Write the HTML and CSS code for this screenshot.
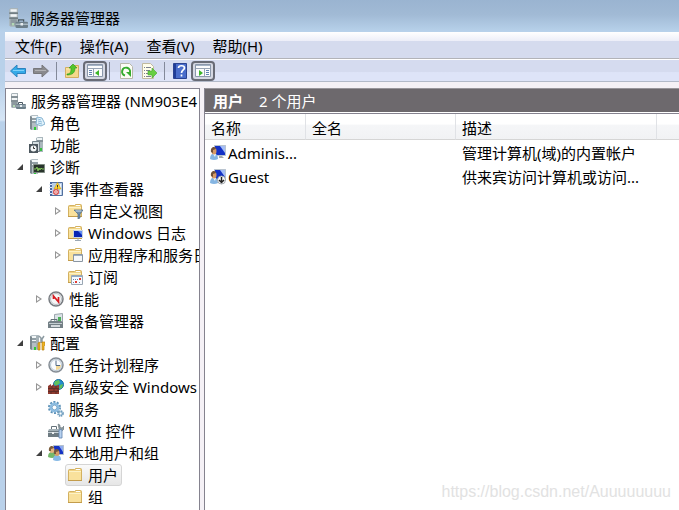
FILE: index.html
```html
<!DOCTYPE html>
<html lang="zh-CN">
<head>
    <meta charset="UTF-8">
    <meta name="viewport" content="width=device-width, initial-scale=1.0">
    <title>服务器管理器</title>
    <link rel="stylesheet" href="styles.css">
</head>
<body>
    <!-- Shared icons -->
    <svg class="icon-defs" aria-hidden="true">
        <symbol id="i-server" viewBox="0 0 16 16">
            <path d="M1 1l1-1h6v15H2l-1-1z" fill="#a9b4b9"/>
            <path d="M2 1h5v2H2zM2 5h5v2H2z" fill="#f2f5f6"/>
            <path d="M1 4h7M1 8h7" stroke="#606c72"/>
            <path d="M2 9h5v5H2z" fill="#8d999f"/>
            <path d="M3 12h2v2H3z" fill="#b3d8b5"/>
            <path d="M8.500 11V9.500h4V11" fill="none" stroke="#4b5962"/>
            <rect x="6" y="11" width="10" height="5" rx="1" fill="#6c7e89"/>
            <path d="M6 13h10" stroke="#b4c2ca"/>
            <path d="M10 12h2v2h-2z" fill="#e6edf0"/>
        </symbol>
        <symbol id="i-tower" viewBox="0 0 16 16">
            <path d="M1 1l2-1h6v15H3l-2-1z" fill="#b4bfc5"/>
            <path d="M1 1l2 1v13l-2-1z" fill="#7d8990"/>
            <path d="M3 1h6v2H3zM3 5h6v1H3z" fill="#f4f8f9"/>
            <path d="M3 4h6M3 7h6" stroke="#718087"/>
            <path d="M5 12h2v3H5z" fill="#2dcc36"/>
        </symbol>
        <symbol id="i-roles" viewBox="0 0 16 16">
            <use href="#i-tower" width="16" height="16"/>
            <path d="M8 2l5 1 3 6-4 2-5-2z" fill="#e2f3fc" stroke="#85b3d2"/>
            <path d="M9 4l3 1M9 6l4 1M9 8l4 1" stroke="#8fbcdb"/>
        </symbol>
        <symbol id="i-features" viewBox="0 0 16 16">
            <path d="M7 1l2-1h5v15H7z" fill="#aab7bd"/>
            <path d="M8 1h5v2H8z" fill="#eef4f5"/>
            <path d="M8 4h6" stroke="#5e6b72"/>
            <path d="M11 11h2v3h-2z" fill="#39bd42"/>
            <path d="M3.500 4.500h7v10h-7z" fill="#d5dee2" stroke="#75838a"/>
            <path d="M0 7h9v9H0z" fill="#4d575e"/>
            <circle cx="4.500" cy="11.500" r="3" fill="#f5f8f9"/>
            <path d="M4.500 9.500v2h1.500" stroke="#333" fill="none"/>
        </symbol>
        <symbol id="i-diag" viewBox="0 0 16 16">
            <use href="#i-tower" width="16" height="16"/>
            <path d="M4.500 5.500h11v8h-11z" fill="#28342c" stroke="#7f8a82"/>
            <path d="M5 10h2l1-2 1 4 1-3 1 2 1-2 1 1h2" fill="none" stroke="#84c95b"/>
        </symbol>
        <symbol id="i-event" viewBox="0 0 16 16">
            <path d="M2.500 1.500h12v13h-12z" fill="#b8cde8" stroke="#526f9d"/>
            <path d="M2 1h2v14H2z" fill="#4a66a0"/>
            <path d="M1 3.500h3M1 6.500h3M1 9.500h3M1 12.500h3" stroke="#dde7f6"/>
            <path d="M12.500 3v10M5 13.500h8" stroke="#eff5fc"/>
            <path d="M9.500 1.500L13 8H6z" fill="#ffd42a" stroke="#c99b16" stroke-width=".6"/>
            <path d="M9.500 4v2M9.500 6.600v.8" stroke="#333"/>
            <circle cx="8" cy="11" r="3" fill="#dc5553"/>
            <circle cx="8" cy="11" r="1.300" fill="none" stroke="#fff" stroke-width=".8"/>
        </symbol>
        <symbol id="i-folder" viewBox="0 0 16 16">
            <path d="M1.500 13.500v-10q0-1 1-1h5l1-1h5q1 0 1 1v11z" fill="#f0d284" stroke="#d3b160"/>
            <path d="M9 2.500h4" stroke="#fff"/>
            <path d="M2 4h12v9H2z" fill="#f9e19c"/>
            <path d="M2 4.500h12" stroke="#fdf2c6"/>
            <path d="M1 13.500h14" stroke="#c39c4b"/>
        </symbol>
        <symbol id="i-views" viewBox="0 0 16 16">
            <use href="#i-folder" width="16" height="16"/>
            <path d="M7 7h9l-3 4v4l-2 1v-5z" fill="#718eaa" stroke="#4c6984" stroke-width=".7"/>
            <path d="M8.500 8h6" stroke="#d2e1ed"/>
        </symbol>
        <symbol id="i-winlog" viewBox="0 0 16 16">
            <use href="#i-folder" width="16" height="16"/>
            <path d="M6.500 5.500h9v7h-9z" fill="#0925b4" stroke="#cbd4df"/>
            <path d="M11 6h4v4z" fill="#638cf0"/>
            <path d="M11 13v2M8 15.500h6" stroke="#9ba8b5"/>
        </symbol>
        <symbol id="i-applog" viewBox="0 0 16 16">
            <use href="#i-folder" width="16" height="16"/>
            <path d="M6.500 7.500h9v7h-9z" fill="#f6f8fa" stroke="#8a96a2"/>
            <path d="M7 8.500h8" stroke="#9fafbf"/>
        </symbol>
        <symbol id="i-subs" viewBox="0 0 16 16">
            <use href="#i-folder" width="16" height="16"/>
            <path d="M4.500 6.500h11v9h-11z" fill="#f7faff" stroke="#9aa6b2"/>
            <path d="M5 7.500h10" stroke="#8eacc9"/>
            <path d="M6 10.500h1m1 0h1m1 0h1M6 13.500h1m5 0h1" stroke="#6584aa"/>
            <path d="M12 9h2v2h-2zM8 12h2v2H8z" fill="#e33c31"/>
        </symbol>
        <symbol id="i-perf" viewBox="0 0 16 16">
            <circle cx="8" cy="8" r="7" fill="#fff" stroke="#777b80" stroke-width="1.500"/>
            <circle cx="8" cy="8" r="5.500" fill="#f6f6f6" stroke="#b7bdc2"/>
            <path d="M5.500 8V5l5 6V6" fill="none" stroke="#d71920" stroke-width="1.700"/>
        </symbol>
        <symbol id="i-device" viewBox="0 0 16 16">
            <path d="M6.500 1.500l8-1v9h-8z" fill="#dbe3e7" stroke="#9aa5ab"/>
            <path d="M10 4h3v4h-3z" fill="#4caf58"/>
            <path d="M3 8.500V6.500h6v2" fill="none" stroke="#667379"/>
            <path d="M0 9l2-1h11l2 1v6H0z" fill="#748086"/>
            <path d="M1 10.500h13" stroke="#c4cdd1"/>
            <path d="M3 12h9v2H3z" fill="#d4dadd"/>
        </symbol>
        <symbol id="i-config" viewBox="0 0 16 16">
            <use href="#i-tower" width="16" height="16"/>
            <path d="M7 1l3-1v14H7z" fill="#a5b1b7"/>
            <path d="M10 1l2 2v5M15 1l-2 3v4" fill="none" stroke="#8d9ba2" stroke-width="1.500"/>
            <path d="M9 8l2-1v8H9zM13 7h3v3l-1 1v4h-2z" fill="#efb322" stroke="#b88112" stroke-width=".7"/>
        </symbol>
        <symbol id="i-clock" viewBox="0 0 16 16">
            <circle cx="8" cy="8" r="7" fill="#edf3f8" stroke="#858d95" stroke-width="1.500"/>
            <circle cx="8" cy="8" r="5.500" fill="#fafcff" stroke="#bac6d0"/>
            <path d="M8 8h5a5 5 0 0 1-5 5z" fill="#f4d998"/>
            <path d="M8 3.500v5h4" fill="none" stroke="#526a87"/>
        </symbol>
        <symbol id="i-firewall" viewBox="0 0 16 16">
            <circle cx="10.500" cy="5.500" r="5" fill="#238ed0" stroke="#156c9f"/>
            <path d="M7 2l4-1 1 3-4 3-2-2zM12 6l3-1-1 4-3 1z" fill="#60c15b"/>
            <path d="M0 7l3-2v2l3-2v2l5-1v9H0z" fill="#8f3a2f"/>
            <path d="M0 9.500h11M0 12.500h11M4 7v2M8 7v2M6 10v2M10 10v2M3 13v2M8 13v2" stroke="#4a2622" stroke-width=".7"/>
        </symbol>
        <symbol id="i-gear" viewBox="0 0 16 16">
            <circle cx="6.500" cy="6.500" r="5.500" fill="none" stroke="#5c91b7" stroke-width="2" stroke-dasharray="2 1.450"/>
            <circle cx="6.500" cy="6.500" r="3.700" fill="#fff" stroke="#8dbce0" stroke-width="2.500"/>
            <circle cx="6.500" cy="6.500" r="2.300" fill="#fff" stroke="#5b92bc" stroke-width=".7"/>
            <circle cx="12.500" cy="12.500" r="2.500" fill="#fff" stroke="#6d9aba" stroke-width="1.700" stroke-dasharray="1.400 .6"/>
            <circle cx="12.500" cy="12.500" r="1.500" fill="#fff" stroke="#79a9ca"/>
        </symbol>
        <symbol id="i-wmi" viewBox="0 0 16 16">
            <path d="M3.500 6V3.500h5V6" fill="none" stroke="#65727a"/>
            <path d="M1 6h10l2 3v5H0V8z" fill="#a2afb5"/>
            <path d="M0 8h12v6H0z" fill="#6e7b82"/>
            <path d="M0 9.500h11" stroke="#c9d3d8"/>
            <path d="M4 9h2v2H4z" fill="#eef1f2"/>
            <path d="M10 1l2 1v2l2 1 2-2v3l-2 2-3-2z" fill="#8c9aa0" stroke="#5e6a70" stroke-width=".5"/>
            <path d="M11 7q2-1 3 0v8h-3z" fill="#b7d1ef" stroke="#5d82ad" stroke-width=".8"/>
        </symbol>
        <symbol id="i-user" viewBox="0 0 16 16">
            <path d="M4.500.5h11v10h-11z" fill="#1431c5" stroke="#b9c4cf"/>
            <path d="M10 1h5v7z" fill="#a5bdf5"/>
            <path d="M9 11h3l2 2H9z" fill="#a4a9ad"/>
            <path d="M0 14q0-5 4-6 4 1 4 6-4 2-8 0z" fill="#85b5e2"/>
            <path d="M3 9l2 3 1-3z" fill="#edf6fc"/>
            <ellipse cx="4" cy="6" rx="2.500" ry="3.500" fill="#d69a65"/>
            <path d="M1 7C0 1 6 1 6 4L3 5v3z" fill="#705038"/>
        </symbol>
        <symbol id="i-guest" viewBox="0 0 16 16">
            <use href="#i-user" width="16" height="16"/>
            <circle cx="11.500" cy="11" r="4" fill="#fff" stroke="#9ea4aa"/>
            <path d="M11.500 8v5M9 11l2.500 2.500L14 11" fill="none" stroke="#222" stroke-width="1.500"/>
        </symbol>
        <symbol id="i-group" viewBox="0 0 16 16">
            <path d="M5.500.5h10v9h-10z" fill="#1532c4" stroke="#b4c0cd"/>
            <path d="M11 1h4v6z" fill="#8eabf0"/>
            <path d="M0 12q0-5 4-5t4 5q-4 2-8 0z" fill="#74b86a"/>
            <ellipse cx="4" cy="5" rx="2.500" ry="3" fill="#e4b37e"/>
            <path d="M1 6C0 0 6 0 6 3L3 4v2z" fill="#7b5c3c"/>
            <path d="M5 15q0-5 4-5t4 5q-4 2-8 0z" fill="#86b9e6"/>
            <ellipse cx="9" cy="8" rx="2.500" ry="3" fill="#d69b66"/>
            <path d="M6 9c-1-6 5-6 5-3L8 7v2z" fill="#76583e"/>
        </symbol>
        <symbol id="i-arrow" viewBox="0 0 16 16">
            <path d="M.5 8L7 2v3.500h8.500v5H7V14z"/>
            <path d="M3 7.500h11" class="shine"/>
        </symbol>
        <symbol id="i-up" viewBox="0 0 16 16">
            <path d="M1.500 4.500h5l1-2h7v12h-13z" fill="#f5d98b" stroke="#d2ae60"/>
            <path d="M2 6h12" stroke="#fbeab5"/>
            <path d="M3 11c4 0 4-3 4-6H5l4-4 4 4h-2c0 5-3 7-8 7z" fill="#52c52d" stroke="#29951b" stroke-width=".6"/>
        </symbol>
        <symbol id="i-pane" viewBox="0 0 16 16">
            <path d="M.5 1.500h15v12H.5z" fill="#fafbfd" stroke="#8b98ab"/>
            <path d="M1 2.500h14" stroke="#a4b2c6"/>
            <path d="M1 5.500h14M6.500 6v7" stroke="#98a4b5"/>
            <path d="M2 7.500h3M2 9.500h3M2 11.500h3" stroke="#5e83b1"/>
            <path d="M12 7v6L8 10z" fill="#3bb528"/>
        </symbol>
        <symbol id="i-refresh" viewBox="0 0 16 16">
            <path d="M2.500.5h9l3 3v12h-12z" fill="#fcfcf6" stroke="#b8b8ab"/>
            <path d="M7 12.500a4 4 0 1 1 5-3" fill="none" stroke="#35ac2e" stroke-width="2"/>
            <path d="M8 9h5v5z" fill="#35ac2e"/>
        </symbol>
        <symbol id="i-export" viewBox="0 0 16 16">
            <path d="M1.500.5h8l3 3v12h-11z" fill="#fffdeb" stroke="#c1baa0"/>
            <path d="M3 4.500h1m1 0h5M3 7.500h1m1 0h4M3 10.500h1m1 0h4M3 13.500h1m1 0h5" stroke="#7b8090"/>
            <path d="M7 8h4V5l5 5-5 5v-3H7z" fill="#67cf43" stroke="#45a52d" stroke-width=".6"/>
        </symbol>
        <symbol id="i-help" viewBox="0 0 16 16">
            <path d="M1.500.5h13v15h-13z" fill="#4a6dcb" stroke="#2b4392"/>
            <path d="M2 1h2v14H2z" fill="#203d98"/>
            <path d="M6.500 5c0-3 6-3 6 0 0 2-3 2-3 5M9.500 11.500v2" fill="none" stroke="#fff" stroke-width="1.700"/>
        </symbol>
    </svg>

    <header class="titlebar">
        <svg class="app-icon"><use href="#i-server"/></svg>
        <h1>服务器管理器</h1>
    </header>

    <div class="frame">
        <nav class="menubar">
            <button type="button">文件(F)</button>
            <button type="button">操作(A)</button>
            <button type="button">查看(V)</button>
            <button type="button">帮助(H)</button>
        </nav>

        <div class="toolbar">
            <button type="button" class="back" aria-label="后退"><svg class="icon"><use href="#i-arrow"/></svg></button>
            <button type="button" class="forward flip" aria-label="前进"><svg class="icon"><use href="#i-arrow"/></svg></button>
            <span class="sep"></span>
            <button type="button" aria-label="向上"><svg class="icon"><use href="#i-up"/></svg></button>
            <button type="button" class="pressed" aria-label="显示/隐藏控制台树"><svg class="icon"><use href="#i-pane"/></svg></button>
            <span class="sep after-toggle"></span>
            <button type="button" aria-label="刷新"><svg class="icon"><use href="#i-refresh"/></svg></button>
            <button type="button" aria-label="导出列表"><svg class="icon"><use href="#i-export"/></svg></button>
            <span class="sep"></span>
            <button type="button" aria-label="帮助"><svg class="icon"><use href="#i-help"/></svg></button>
            <button type="button" class="pressed flip" aria-label="显示/隐藏操作窗格"><svg class="icon"><use href="#i-pane"/></svg></button>
        </div>

        <main class="panes">
            <div class="tree">
                <a href="#" class="node root"><svg class="icon"><use href="#i-server"/></svg>服务器管理器 (NM903E4</a>
                <ul>
                    <li>
                        <div class="row"><a href="#" class="node"><svg class="icon"><use href="#i-roles"/></svg>角色</a></div>
                    </li>
                    <li>
                        <div class="row"><a href="#" class="node"><svg class="icon"><use href="#i-features"/></svg>功能</a></div>
                    </li>
                    <li>
                        <div class="row"><button type="button" class="twisty open" aria-label="折叠"></button><a href="#" class="node"><svg class="icon"><use href="#i-diag"/></svg>诊断</a></div>
                        <ul>
                            <li>
                                <div class="row"><button type="button" class="twisty open" aria-label="折叠"></button><a href="#" class="node"><svg class="icon"><use href="#i-event"/></svg>事件查看器</a></div>
                                <ul>
                                    <li><div class="row"><button type="button" class="twisty" aria-label="展开"></button><a href="#" class="node"><svg class="icon"><use href="#i-views"/></svg>自定义视图</a></div></li>
                                    <li><div class="row"><button type="button" class="twisty" aria-label="展开"></button><a href="#" class="node"><svg class="icon"><use href="#i-winlog"/></svg>Windows 日志</a></div></li>
                                    <li><div class="row"><button type="button" class="twisty" aria-label="展开"></button><a href="#" class="node"><svg class="icon"><use href="#i-applog"/></svg>应用程序和服务日</a></div></li>
                                    <li><div class="row"><a href="#" class="node"><svg class="icon"><use href="#i-subs"/></svg>订阅</a></div></li>
                                </ul>
                            </li>
                            <li><div class="row"><button type="button" class="twisty" aria-label="展开"></button><a href="#" class="node"><svg class="icon"><use href="#i-perf"/></svg>性能</a></div></li>
                            <li><div class="row"><a href="#" class="node"><svg class="icon"><use href="#i-device"/></svg>设备管理器</a></div></li>
                        </ul>
                    </li>
                    <li>
                        <div class="row"><button type="button" class="twisty open" aria-label="折叠"></button><a href="#" class="node"><svg class="icon"><use href="#i-config"/></svg>配置</a></div>
                        <ul>
                            <li><div class="row"><button type="button" class="twisty" aria-label="展开"></button><a href="#" class="node"><svg class="icon"><use href="#i-clock"/></svg>任务计划程序</a></div></li>
                            <li><div class="row"><button type="button" class="twisty" aria-label="展开"></button><a href="#" class="node"><svg class="icon"><use href="#i-firewall"/></svg>高级安全 Windows</a></div></li>
                            <li><div class="row"><a href="#" class="node"><svg class="icon"><use href="#i-gear"/></svg>服务</a></div></li>
                            <li><div class="row"><a href="#" class="node"><svg class="icon"><use href="#i-wmi"/></svg>WMI 控件</a></div></li>
                            <li>
                                <div class="row"><button type="button" class="twisty open" aria-label="折叠"></button><a href="#" class="node"><svg class="icon"><use href="#i-group"/></svg>本地用户和组</a></div>
                                <ul>
                                    <li><div class="row"><a href="#" class="node selected"><svg class="icon"><use href="#i-folder"/></svg>用户</a></div></li>
                                    <li><div class="row"><a href="#" class="node"><svg class="icon"><use href="#i-folder"/></svg>组</a></div></li>
                                </ul>
                            </li>
                        </ul>
                    </li>
                </ul>
            </div>

            <section class="content">
                <header class="content-head">
                    <h2>用户</h2>
                    <span>2 个用户</span>
                </header>
                <table>
                    <colgroup>
                        <col class="col-name">
                        <col class="col-full">
                        <col class="col-desc">
                        <col>
                    </colgroup>
                    <thead>
                        <tr>
                            <th>名称</th>
                            <th>全名</th>
                            <th>描述</th>
                            <th></th>
                        </tr>
                    </thead>
                    <tbody>
                        <tr>
                            <td><div class="user"><svg class="icon"><use href="#i-user"/></svg>Adminis...</div></td>
                            <td></td>
                            <td>管理计算机(域)的内置帐户</td>
                            <td></td>
                        </tr>
                        <tr>
                            <td><div class="user"><svg class="icon"><use href="#i-guest"/></svg>Guest</div></td>
                            <td></td>
                            <td>供来宾访问计算机或访问...</td>
                            <td></td>
                        </tr>
                    </tbody>
                </table>
            </section>
        </main>
    </div>
    <div class="watermark">https://blog.csdn.net/Auuuuuuuu</div>
</body>
</html>
```
FILE: styles.css
```css
* {
    box-sizing: border-box;
}
body {
    margin: 0;
    height: 100vh;
    display: flex;
    flex-direction: column;
    overflow: hidden;
    position: relative;
    font-family: "Noto Sans", "Noto Sans CJK SC", sans-serif;
    font-size: 15px;
    line-height: 22px;
    color: #000;
    background: linear-gradient(#b9d1ea 80px, #d6e5f5 120px, #b9d1ea 122px);
}
button {
    font: inherit;
    color: inherit;
    padding: 0;
    border: none;
    background: none;
}
ul {
    list-style: none;
    margin: 0;
    padding: 0;
}
.icon-defs {
    display: none;
}
.icon {
    width: 16px;
    height: 16px;
    flex: none;
}

/* Title and menus */
.titlebar {
    display: flex;
    align-items: center;
    gap: 2px;
    height: 32px;
    flex: none;
    padding: 4px 8px 0;
    background: linear-gradient(#9ab4d1, #a1bad5 45%, #b8d2eb);
}
.titlebar h1 {
    margin: 0;
    font-size: 15px;
    font-weight: normal;
}
.app-icon {
    width: 20px;
    height: 20px;
}
.frame {
    flex: 1;
    min-height: 0;
    display: flex;
    flex-direction: column;
    margin-left: 5px;
    background: #f5f1f6;
}
.menubar {
    display: flex;
    gap: 18px;
    height: 27px;
    flex: none;
    padding: 1px 10px 0;
    border-bottom: 1px solid #b2b3b8;
    background: linear-gradient(#fff, #eceef8 9px, #d5dbee 9px);
}
.toolbar {
    display: flex;
    align-items: center;
    gap: 7px;
    height: 23px;
    flex: none;
    padding: 0 5px;
    border-top: 1px solid #fff;
    border-bottom: 1px solid #b3bac9;
    background: linear-gradient(#d5dbef 55%, #dee4f8 60%);
}
.toolbar button {
    display: flex;
    align-items: center;
    justify-content: center;
}
.toolbar .sep {
    width: 1px;
    height: 18px;
    background: #83899a;
}
.toolbar .after-toggle {
    margin: 0 1px 0 -5px;
}
.toolbar .pressed {
    width: 24px;
    height: 20px;
    margin-left: -4px;
    border: 2px solid #686b76;
    border-radius: 4px;
    background: #d5d8e3;
}
.back {
    fill: #35aae8;
    stroke: #2c82bd;
}
.back .icon {
    color: #7fd2fa;
}
.forward {
    fill: #8a8a8e;
    stroke: #77777b;
}
.forward .icon {
    color: #b2b2b5;
}
.shine {
    stroke: currentColor;
}
.flip .icon {
    transform: scaleX(-1);
}

/* Panes */
.panes {
    flex: 1;
    min-height: 0;
    display: flex;
    gap: 4px;
    padding-top: 6px;
}
.tree {
    width: 195px;
    flex: none;
    padding: 1px 0 0 2px;
    overflow: hidden;
    white-space: nowrap;
    border: 1px solid #85838f;
    border-bottom: none;
    background: #fff;
}
.tree > ul {
    padding-left: 5px;
}
.tree ul ul {
    padding-left: 19px;
}
.row {
    display: flex;
    padding-left: 14px;
}
.twisty {
    display: flex;
    align-items: center;
    flex: none;
    width: 14px;
    height: 22px;
    margin-left: -14px;
    padding-left: 4px;
}
.twisty::before {
    content: "";
    width: 6px;
    height: 8px;
    background: #969696;
    clip-path: polygon(0 0, 100% 50%, 0 100%, 0 0, 1px 2px, 1px 6px, 4px 50%, 1px 2px);
}
.twisty.open::before {
    height: 6px;
    background: #404040;
    clip-path: polygon(100% 0, 100% 100%, 0 100%);
}
.node {
    display: flex;
    align-items: center;
    gap: 5px;
    height: 22px;
    padding: 0 3px 0 1px;
    border: 1px solid transparent;
    border-radius: 3px;
    color: inherit;
    text-decoration: none;
}
.node.selected {
    border-color: #d5d5d5;
    background: linear-gradient(#fafafa, #e6e6e6);
}
.content {
    flex: 1;
    min-width: 0;
    border-left: 1px solid #85838f;
    background: #fff;
}
.content-head {
    display: flex;
    gap: 16px;
    height: 25px;
    padding: 1px 8px;
    color: #fff;
    background: #6d696d;
    border-top: 1px solid #98959a;
    border-bottom: 1px solid #fff;
}
.content-head h2 {
    margin: 0;
    font-size: 15px;
    line-height: 22px;
}
table {
    width: 100%;
    table-layout: fixed;
    border-collapse: separate;
    border-spacing: 0;
    border-top: 1px solid #85838f;
}
.col-name {
    width: 101px;
}
.col-full {
    width: 150px;
}
.col-desc {
    width: 201px;
}
th {
    height: 26px;
    padding: 2px 6px 0;
    font-weight: normal;
    text-align: left;
    border-right: 1px solid #e0e2e6;
    border-bottom: 1px solid #d5d5d5;
    background: linear-gradient(#fff 40%, #f5f6f8 45%, #f1f2f4);
}
th:last-child {
    border-right: none;
}
td {
    height: 24px;
    padding: 2px 6px 0;
    white-space: nowrap;
}
.user {
    display: flex;
    align-items: center;
    gap: 2px;
    margin-left: -1px;
}
.watermark {
    position: absolute;
    right: 8px;
    bottom: 7px;
    font-family: "Liberation Sans", sans-serif;
    font-size: 16px;
    color: #e2e2e2;
}
```
